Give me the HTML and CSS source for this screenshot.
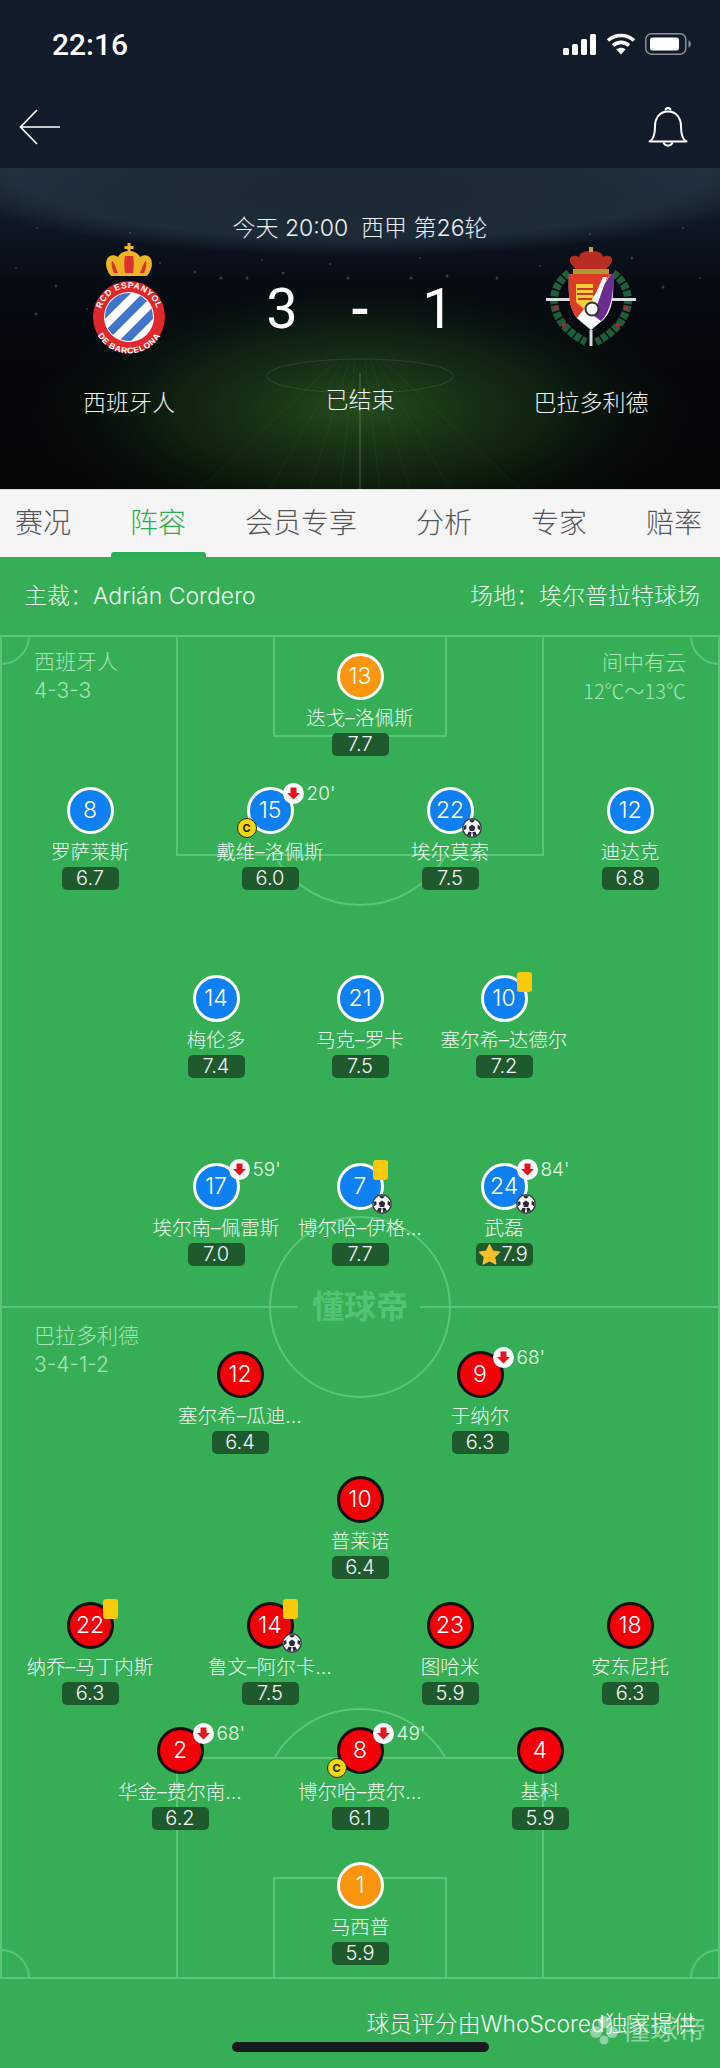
FILE: index.html
```html
<!DOCTYPE html>
<html lang="zh">
<head>
<meta charset="utf-8">
<title>西班牙人 3-1 巴拉多利德</title>
<link rel="stylesheet" href="styles.css">
</head>
<body>
<svg class="defs" width="0" height="0" aria-hidden="true">
  <defs>
    <symbol id="ball" viewBox="0 0 20 20">
      <circle cx="10" cy="10" r="9.200" fill="#fff" stroke="#3a3a4a" stroke-width="1.400"/>
      <path d="M10 6.6l3.3 2.4-1.2 3.9H7.900L6.700 9z" fill="#2a2a38"/>
      <path d="M10 1.200l3 1.500-3 2-3-2zM18.400 8l-.4 4.200-2.600-1.700.4-3.500zM1.600 8l.4 4.200 2.600-1.700-.4-3.500zM5 16.800l1.600-3 3 .2-.8 4.500zM15 16.800l-1.600-3-3 .2.800 4.500z" fill="#2a2a38"/>
    </symbol>
    <symbol id="down" viewBox="0 0 21 21">
      <circle cx="10.500" cy="10.500" r="10.500" fill="#fff"/>
      <path d="M7.500 4.500h6v5.500h3.500l-6.500 6.500L4 10h3.500z" fill="#e8141c"/>
    </symbol>
    <symbol id="star" viewBox="0 0 24 24">
      <path d="M12 1.800l3.200 6.700 7.300 1-5.300 5.100 1.300 7.300-6.500-3.500-6.500 3.500 1.300-7.300L1.500 9.500l7.300-1z" fill="#f9bf2b" stroke="#f9bf2b" stroke-width="1.500" stroke-linejoin="round"/>
    </symbol>
  </defs>
</svg>

<div class="page">
  <header class="topbar">
    <div class="status">
      <span class="clock">22:16</span>
      <div class="status-icons">
        <svg width="34" height="21" viewBox="0 0 34 21"><g fill="#fff"><rect x="0" y="14" width="6" height="7" rx="1.500"/><rect x="9" y="10" width="6" height="11" rx="1.500"/><rect x="18" y="5" width="6" height="16" rx="1.500"/><rect x="27" y="0" width="6" height="21" rx="1.500"/></g></svg>
        <svg width="30" height="22" viewBox="0 0 30 22"><g fill="none" stroke="#fff" stroke-width="3.600"><path d="M2 7.500C9.500.8 20.500.8 28 7.500"/><path d="M7 12.500c4.800-4.200 11.200-4.200 16 0"/></g><path d="M15 21.500l-4.700-5.200c2.800-2.200 6.600-2.200 9.400 0z" fill="#fff"/></svg>
        <svg width="46" height="22" viewBox="0 0 46 22"><rect x=".8" y=".8" width="40" height="20.400" rx="5.500" fill="none" stroke="#8b929a" stroke-width="1.500"/><rect x="5" y="4.500" width="29" height="13" rx="2.500" fill="#fff"/><path d="M43.500 7.500c1.700.5 2.300 1.700 2.300 3.500s-.6 3-2.300 3.500z" fill="#8b929a"/></svg>
      </div>
    </div>
    <nav class="nav">
      <svg width="42" height="36" viewBox="0 0 42 36"><path d="M18 1L1.500 18 18 35M1.500 18H41" fill="none" stroke="#fff" stroke-width="1.700"/></svg>
      <svg width="40" height="44" viewBox="0 0 40 44"><g fill="none" stroke="#fff" stroke-width="2"><path d="M1.500 36.500c4-2 5.500-7 5.500-15 0-9 5-15 13-15s13 6 13 15c0 8 1.500 13 5.500 15z" stroke-linejoin="round"/><path d="M15.500 37.500a4.800 4.800 0 0 0 9 0"/><path d="M17.500 5.500a2.500 2.500 0 0 1 5 0"/></g></svg>
    </nav>
  </header>

  <section class="hero">
    <svg class="hero-art" width="720" height="321" viewBox="0 0 720 321" aria-hidden="true">
      <defs>
        <radialGradient id="pitch-glow" cx="360" cy="240" r="1" gradientUnits="userSpaceOnUse" gradientTransform="translate(360 240) scale(340 135) translate(-360 -240)">
          <stop offset="0" stop-color="#3a7428" stop-opacity=".62"/>
          <stop offset=".55" stop-color="#275820" stop-opacity=".32"/>
          <stop offset="1" stop-color="#0a1a0a" stop-opacity="0"/>
        </radialGradient>
        <radialGradient id="dome-glow" gradientUnits="userSpaceOnUse" cx="360" cy="0" r="1" gradientTransform="translate(360 0) scale(440 88) translate(-360 0)">
          <stop offset="0" stop-color="#263847" stop-opacity=".35"/>
          <stop offset=".8" stop-color="#2c4252" stop-opacity=".5"/>
          <stop offset=".92" stop-color="#2c4252" stop-opacity=".22"/>
          <stop offset="1" stop-color="#2c4252" stop-opacity="0"/>
        </radialGradient>
      </defs>
      <rect width="720" height="321" fill="url(#dome-glow)"/>
      <rect width="720" height="321" fill="url(#pitch-glow)"/>
      <g stroke="#b9d8a8" stroke-opacity=".06" stroke-width="1">
        <path d="M340 190L200 321M345 190L270 321M350 190L310 321M355 190L340 321M365 190L380 321M370 190L410 321M375 190L450 321M380 190L520 321"/>
      </g>
      <ellipse cx="360" cy="208" rx="93" ry="17" fill="none" stroke="#fff" stroke-opacity=".1"/>
      <line x1="360" y1="205" x2="360" y2="321" stroke="#fff" stroke-opacity=".25"/>
      <g fill="#fff" fill-opacity=".2">
        <circle cx="36" cy="146" r="1.500"/><circle cx="87" cy="141" r="1"/><circle cx="195" cy="104" r="1.500"/><circle cx="221" cy="110" r="1.500"/><circle cx="247" cy="110" r="1.500"/><circle cx="283" cy="105" r="1.500"/><circle cx="348" cy="110" r="1.500"/><circle cx="411" cy="110" r="1.500"/><circle cx="447" cy="108" r="1.500"/><circle cx="497" cy="110" r="1.500"/><circle cx="663" cy="119" r="1.500"/><circle cx="632" cy="90" r="1.500"/><circle cx="683" cy="60" r="1"/><circle cx="37" cy="60" r="1"/><circle cx="56" cy="118" r="1.500"/><circle cx="160" cy="95" r="1"/><circle cx="262" cy="92" r="1"/><circle cx="330" cy="96" r="1"/><circle cx="420" cy="90" r="1"/><circle cx="540" cy="98" r="1"/><circle cx="590" cy="66" r="1"/><circle cx="130" cy="65" r="1"/><circle cx="700" cy="110" r="1"/><circle cx="16" cy="100" r="1"/>
      </g>
    </svg>
    <p class="match-info">今天 20:00&nbsp;&nbsp;西甲 第26轮</p>
    <div class="scoreboard">
      <div class="team team-left">
        <svg class="crest" width="80" height="112" viewBox="0 0 80 112">
          <path d="M22 33c-5-6-6-12-4-17 2-4 7-5 11-2 2-4 6-6 11-6s9 2 11 6c4-3 9-2 11 2 2 5 1 11-4 17z" fill="#efb424"/>
          <path d="M25 30c-2-4-3-9-2-12 2 1 4 7 6 12zM36 30c-1-5-1-13 0-17h8c1 4 1 12 0 17zM55 30c2-4 3-9 2-12-2 1-4 7-6 12z" fill="#d83232"/>
          <path d="M38.500 0h3v3h3v3h-3v4h-3V6h-3V3h3z" fill="#efb424"/>
          <circle cx="40" cy="74" r="36" fill="#e0282c"/>
          <circle cx="40" cy="74" r="25" fill="#fff"/>
          <clipPath id="esp"><circle cx="40" cy="74" r="24"/></clipPath>
          <g clip-path="url(#esp)" stroke="#3f75c8" stroke-width="8.500"><path d="M8 78L48 38M20 90L60 50M32 102L72 62M-4 66L36 26"/></g>
          <defs>
            <path id="esp-top" d="M11 74a29 29 0 0 1 58 0"/>
            <path id="esp-bot" d="M3.500 74a36.500 36.500 0 0 0 73 0"/>
          </defs>
          <text class="crest-text"><textPath href="#esp-top" startOffset="50%" text-anchor="middle">RCD ESPANYOL</textPath></text>
          <text class="crest-text"><textPath href="#esp-bot" startOffset="50%" text-anchor="middle">DE BARCELONA</textPath></text>
        </svg>
      </div>
      <div class="score">
        <div class="score-line"><span>3</span><span class="dash">-</span><span>1</span></div>
        <p class="state">已结束</p>
      </div>
      <div class="team team-right">
        <svg class="crest" width="92" height="102" viewBox="0 0 92 102">
          <g fill="none" stroke="#1f5c3a" stroke-width="8" stroke-dasharray="6 1.500"><path d="M24 28C1 44 3 78 41 97"/><path d="M68 28c23 16 21 50-17 69"/></g>
          <g fill="#a82a36"><circle cx="11" cy="63" r="2.300"/><circle cx="19" cy="80" r="2.300"/><circle cx="81" cy="63" r="2.300"/><circle cx="73" cy="80" r="2.300"/></g>
          <path d="M1 53h24v3H1zM67 53h24v3H67z" fill="#d8dcdc"/>
          <path d="M44.500 85h3v16h-3z" fill="#d8dcdc"/>
          <g transform="translate(0 2)">
            <path d="M33 26c-4-8-9-9-8-14 1-4 6-4 9-2 1-5 6-6 12-6s11 1 12 6c3-2 8-2 9 2 1 5-4 6-8 14z" fill="#b72c23"/>
            <path d="M44 0h4v5h-4z" fill="#c7a33a"/>
            <path d="M28 22h36v5H28z" fill="#ad9a2e"/>
            <path d="M24 27h44c1 20 0 37-10 46l-12 10-12-10C24 64 23 47 24 27z" fill="#fff"/>
            <path d="M24 27h42L32 71C24 62 23 47 24 27z" fill="#dd3b26"/>
            <path d="M31 37h17v18l-8 8-9-8z" fill="#f1cd3c"/>
            <path d="M32 42h16M32 47h16M33 52h14" stroke="#c43b22" stroke-width="2"/>
            <path d="M68 27h-2L42 64l14 10C66 64 69 47 68 27z" fill="#6a2c91"/>
            <path d="M62 30h-4L44 62l5 5z" fill="#fff"/>
            <circle cx="47" cy="62" r="6.500" fill="#fff" stroke="#333" stroke-width="2"/>
          </g>
        </svg>
      </div>
      <p class="team-name name-left">西班牙人</p>
      <p class="team-name name-right">巴拉多利德</p>
    </div>
  </section>

  <div class="tabs">
    <span class="tab">赛况</span>
    <span class="tab is-active">阵容</span>
    <span class="tab">会员专享</span>
    <span class="tab">分析</span>
    <span class="tab">专家</span>
    <span class="tab">赔率</span>
  </div>

  <main class="pitch">
    <svg class="lines" width="720" height="1511" viewBox="0 0 720 1511" aria-hidden="true">
      <g fill="none" stroke="#5bc679" stroke-width="2">
        <path d="M1 79H719V1421H1z"/>
        <path d="M1 107A28 28 0 0 0 29 79M691 79a28 28 0 0 0 28 28"/>
        <path d="M177 79V298H543V79"/>
        <path d="M274 79V179H446V79"/>
        <path d="M274 298A99 99 0 0 0 446 298"/>
        <path d="M1 750H297M420 750H719"/>
        <circle cx="360" cy="750" r="90"/>
        <path d="M177 1421V1201H543V1421"/>
        <path d="M274 1421V1321H446V1421"/>
        <path d="M274 1201A100 100 0 0 1 446 1201"/>
        <path d="M1 1393A28 28 0 0 1 29 1421M691 1421a28 28 0 0 1 28-28"/>
      </g>
    </svg>
    <div class="watermark">懂球帝</div>

    <div class="side side-home"><p>西班牙人</p><p>4-3-3</p></div>
    <div class="side side-weather"><p>间中有云</p><p class="temp">12℃～13℃</p></div>
    <div class="side side-away"><p>巴拉多利德</p><p>3-4-1-2</p></div>

    <div class="officials">
      <span>主裁：Adrián Cordero</span>
      <span>场地：埃尔普拉特球场</span>
    </div>

    <div class="row row-gk">
      <div class="player"><div class="disc keeper">13</div><div class="name">迭戈–洛佩斯</div><div class="rating">7.7</div></div>
    </div>
    <div class="row row-four gap-31">
      <div class="player"><div class="disc home">8</div><div class="name">罗萨莱斯</div><div class="rating">6.7</div></div>
      <div class="player"><div class="disc home">15
          <svg class="mark sub"><use href="#down"/></svg><span class="minute">20'</span><span class="mark captain">C</span></div>
        <div class="name">戴维–洛佩斯</div><div class="rating">6.0</div></div>
      <div class="player"><div class="disc home">22<svg class="mark goal"><use href="#ball"/></svg></div><div class="name">埃尔莫索</div><div class="rating">7.5</div></div>
      <div class="player"><div class="disc home">12</div><div class="name">迪达克</div><div class="rating">6.8</div></div>
    </div>
    <div class="row row-mid gap-85">
      <div class="player"><div class="disc home">14</div><div class="name">梅伦多</div><div class="rating">7.4</div></div>
      <div class="player"><div class="disc home">21</div><div class="name">马克–罗卡</div><div class="rating">7.5</div></div>
      <div class="player"><div class="disc home">10<span class="mark card"></span></div><div class="name">塞尔希–达德尔</div><div class="rating">7.2</div></div>
    </div>
    <div class="row row-mid gap-85">
      <div class="player"><div class="disc home">17<svg class="mark sub"><use href="#down"/></svg><span class="minute">59'</span></div><div class="name">埃尔南–佩雷斯</div><div class="rating">7.0</div></div>
      <div class="player"><div class="disc home">7<span class="mark card"></span><svg class="mark goal"><use href="#ball"/></svg></div><div class="name">博尔哈–伊格...</div><div class="rating">7.7</div></div>
      <div class="player"><div class="disc home">24<svg class="mark sub"><use href="#down"/></svg><span class="minute">84'</span><svg class="mark goal"><use href="#ball"/></svg></div><div class="name">武磊</div><div class="rating has-star"><svg class="star"><use href="#star"/></svg>7.9</div></div>
    </div>

    <div class="row row-two gap-85">
      <div class="player"><div class="disc away">12</div><div class="name">塞尔希–瓜迪...</div><div class="rating">6.4</div></div>
      <div class="player"><div class="disc away">9<svg class="mark sub"><use href="#down"/></svg><span class="minute">68'</span></div><div class="name">于纳尔</div><div class="rating">6.3</div></div>
    </div>
    <div class="row row-gk gap-22">
      <div class="player"><div class="disc away">10</div><div class="name">普莱诺</div><div class="rating">6.4</div></div>
    </div>
    <div class="row row-four gap-23">
      <div class="player"><div class="disc away">22<span class="mark card"></span></div><div class="name">纳乔–马丁内斯</div><div class="rating">6.3</div></div>
      <div class="player"><div class="disc away">14<span class="mark card"></span><svg class="mark goal"><use href="#ball"/></svg></div><div class="name">鲁文–阿尔卡...</div><div class="rating">7.5</div></div>
      <div class="player"><div class="disc away">23</div><div class="name">图哈米</div><div class="rating">5.9</div></div>
      <div class="player"><div class="disc away">18</div><div class="name">安东尼托</div><div class="rating">6.3</div></div>
    </div>
    <div class="row row-back gap-22">
      <div class="player"><div class="disc away">2<svg class="mark sub"><use href="#down"/></svg><span class="minute">68'</span></div><div class="name">华金–费尔南...</div><div class="rating">6.2</div></div>
      <div class="player"><div class="disc away">8<svg class="mark sub"><use href="#down"/></svg><span class="minute">49'</span><span class="mark captain">C</span></div><div class="name">博尔哈–费尔...</div><div class="rating">6.1</div></div>
      <div class="player"><div class="disc away">4</div><div class="name">基科</div><div class="rating">5.9</div></div>
    </div>
    <div class="row row-gk gap-32">
      <div class="player"><div class="disc keeper">1</div><div class="name">马西普</div><div class="rating">5.9</div></div>
    </div>

    <p class="credit">球员评分由WhoScored独家提供</p>
    <div class="stamp">
      <svg width="30" height="30" viewBox="0 0 30 30"><g fill="#fff" fill-opacity=".45"><circle cx="15" cy="7" r="6"/><circle cx="7" cy="17" r="6"/><circle cx="23" cy="17" r="6"/><circle cx="15" cy="25" r="4.500"/></g></svg>
      <span>懂球帝</span>
    </div>
    <div class="home-bar"></div>
  </main>
</div>
</body>
</html>
```

FILE: styles.css
```css
* { box-sizing: border-box; }
html, body { margin: 0; padding: 0; }
body {
  width: 720px;
  height: 2068px;
  overflow: hidden;
  font-family: "Inter", "Noto Sans CJK SC", sans-serif;
  color: #fff;
  background: #35ae55;
}
p { margin: 0; }
.defs { position: absolute; }
.page { width: 720px; height: 2068px; display: flex; flex-direction: column; }

/* top bar */
.topbar { height: 168px; background: #121b29; padding: 0 28px 0 19px; }
.status { height: 88px; display: flex; justify-content: space-between; align-items: center; padding: 0 1px 0 33px; }
.clock { font-family: "Roboto", sans-serif; font-size: 30px; font-weight: 500; }
.status-icons { display: flex; align-items: center; gap: 9px; }
.nav { height: 78px; display: flex; justify-content: space-between; align-items: center; padding-right: 4px; }

/* hero */
.hero {
  position: relative;
  height: 321px;
  padding-top: 45px;
  background: linear-gradient(#151f2b 0, #0e1621 60px, #060a12 120px, #04070b 200px, #050805 100%);
}
.hero-art { position: absolute; left: 0; top: 0; }
.match-info {
  position: relative;
  text-align: center;
  font-size: 23px;
  line-height: 30px;
  font-weight: 300;
  color: #eef0f2;
}
.scoreboard {
  position: relative;
  display: grid;
  grid-template-columns: 258px 204px 258px;
  grid-template-rows: 145px 30px;
}
.team { height: 145px; display: flex; justify-content: center; }
.team-left { grid-column: 1; grid-row: 1; }
.team-right { grid-column: 3; grid-row: 1; padding-top: 2px; }
.crest { flex: none; }
.crest-text { font-family: "Liberation Sans", sans-serif; font-size: 8.500px; font-weight: 700; fill: #fff; letter-spacing: .6px; }
.score { grid-column: 2; grid-row: 1 / span 2; text-align: center; }
.score-line {
  display: grid;
  grid-template-columns: repeat(3, 78px);
  justify-content: center;
  margin-top: 32px;
  font-family: "Roboto", sans-serif;
  font-size: 56px;
  line-height: 68px;
  font-weight: 400;
}
.dash { font-weight: 500; }
.state { margin-top: 42px; font-size: 23px; line-height: 30px; font-weight: 300; color: #eef0f2; }
.team-name { grid-row: 2; text-align: center; font-size: 23px; line-height: 30px; font-weight: 300; color: #eef0f2; }
.name-left { grid-column: 1; }
.name-right { grid-column: 3; }

/* tabs */
.tabs {
  height: 68px;
  display: flex;
  gap: 59px;
  padding-left: 15px;
  background: #f5f5f5;
  border-top: 1px solid #d9dcd9;
}
.tab {
  position: relative;
  font-size: 28px;
  line-height: 67px;
  font-weight: 300;
  color: #555;
}
.tab.is-active { color: #2bae57; }
.tab.is-active::after {
  content: "";
  position: absolute;
  left: -19px;
  right: -20px;
  bottom: 0;
  height: 5px;
  border-radius: 3px 3px 0 0;
  background: #2bae57;
}

/* pitch */
.pitch { position: relative; flex: 1; background: #35ae55; }
.lines { position: absolute; left: 0; top: 0; }
.watermark {
  position: absolute;
  left: 300px;
  top: 727px;
  width: 120px;
  text-align: center;
  font-size: 32px;
  line-height: 46px;
  font-weight: 700;
  color: #52c474;
}
.side { position: absolute; font-size: 21px; line-height: 29px; font-weight: 300; color: #a8e4b8; }
.side-home { left: 34px; top: 90px; }
.side-weather { right: 34px; top: 90px; text-align: right; font-family: "Noto Sans CJK SC", sans-serif; }
.temp { font-size: 20px; }
.side-away { left: 34px; top: 764px; }

.officials {
  position: relative;
  height: 79px;
  padding: 24px 20px 0 24px;
  display: flex;
  justify-content: space-between;
  font-size: 23px;
  line-height: 30px;
  font-weight: 300;
  color: #eaf7ee;
}

.row { position: relative; display: flex; justify-content: center; }
.officials + .row { margin-top: 17px; }
.gap-22 { margin-top: 22px; }
.gap-23 { margin-top: 23px; }
.gap-31 { margin-top: 31px; }
.gap-32 { margin-top: 32px; }
.gap-85 { margin-top: 85px; }
.row-gk .player { width: 180px; }
.row-four .player { width: 180px; }
.row-mid .player { width: 144px; }
.row-two .player { width: 240px; }
.row-back .player { width: 180px; }

.player { height: 103px; display: flex; flex-direction: column; align-items: center; }
.disc {
  position: relative;
  width: 47px;
  height: 47px;
  border-radius: 50%;
  border: 3px solid #fff;
  font-family: "Inter", sans-serif;
  font-size: 23px;
  font-weight: 300;
  line-height: 41px;
  text-align: center;
}
.disc.home { background: #0f80f2; }
.disc.keeper { background: #fb9510; }
.disc.away { background: #f40008; border-color: #111; }

.name {
  margin-top: 5px;
  height: 26px;
  font-size: 19.500px;
  line-height: 26px;
  font-weight: 300;
  white-space: nowrap;
  color: #eef9f1;
}
.rating {
  position: relative;
  margin-top: 2px;
  width: 57px;
  height: 23px;
  border-radius: 5px;
  background: #1f5a2f;
  font-size: 20px;
  font-weight: 300;
  line-height: 23px;
  text-align: center;
  color: #f2f5f2;
}
.rating.has-star { padding-left: 26px; text-align: left; }
.star { position: absolute; left: 2px; top: 0; width: 23px; height: 23px; }

.mark { position: absolute; }
.sub { left: 33px; top: -7px; width: 21px; height: 21px; }
.goal { left: 32px; top: 28px; width: 20px; height: 20px; }
.card { left: 33px; top: -6px; width: 15px; height: 20px; border-radius: 3px; background: #fbc90a; }
.captain {
  left: -13px;
  top: 28px;
  width: 20px;
  height: 20px;
  border-radius: 50%;
  background: #f5d60e;
  border: 1px solid #2a2a10;
  color: #222;
  font-size: 11px;
  font-weight: 700;
  line-height: 18px;
}
.minute {
  position: absolute;
  left: 57px;
  top: -8px;
  font-size: 19px;
  line-height: 24px;
  font-weight: 300;
  color: #e4f6e9;
}

.credit {
  margin: 44px 24px 0 0;
  position: relative;
  text-align: right;
  font-size: 22.800px;
  line-height: 30px;
  font-weight: 300;
  color: #f2faf4;
}
.stamp {
  position: absolute;
  right: 14px;
  bottom: 22px;
  display: flex;
  align-items: center;
  gap: 3px;
  font-size: 28px;
  line-height: 32px;
  font-weight: 400;
  color: rgba(255, 255, 255, .45);
}
.home-bar {
  position: absolute;
  left: 232px;
  top: 1485px;
  width: 257px;
  height: 10px;
  border-radius: 5px;
  background: #171a1c;
}
```
